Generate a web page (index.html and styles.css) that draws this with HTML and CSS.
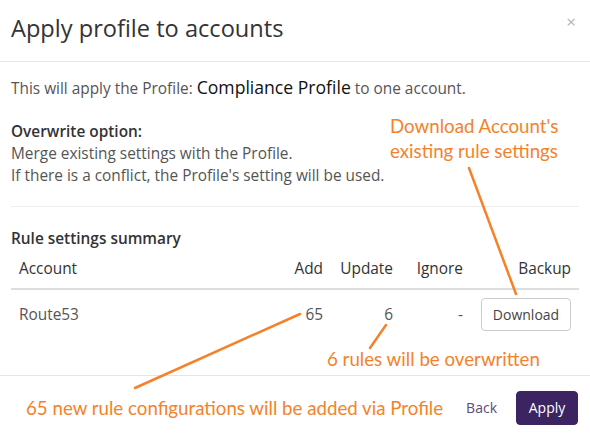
FILE: index.html
```html
<!DOCTYPE html>
<html>
<head>
<meta charset="utf-8">
<link rel="stylesheet" href="styles.css">
</head>
<body>
<div class="modal">
  <div class="modal-header">
    <h4 class="modal-title">Apply profile to accounts</h4>
    <span class="close">&times;</span>
  </div>
  <div class="modal-body">
    <p class="intro">This will apply the Profile: <span class="profile-name">Compliance Profile</span> to one account.</p>
    <div class="option">
      <div class="label">Overwrite option:</div>
      <div>Merge existing settings with the Profile.</div>
      <div>If there is a conflict, the Profile's setting will be used.</div>
    </div>
    <hr class="divider">
    <div class="label">Rule settings summary</div>
    <table class="summary">
      <colgroup>
        <col>
        <col class="c-add">
        <col class="c-update">
        <col class="c-ignore">
        <col class="c-backup">
      </colgroup>
      <thead>
        <tr>
          <th class="left">Account</th>
          <th>Add</th>
          <th>Update</th>
          <th>Ignore</th>
          <th>Backup</th>
        </tr>
      </thead>
      <tbody>
        <tr>
          <td class="left">Route53</td>
          <td>65</td>
          <td>6</td>
          <td>-</td>
          <td><button class="btn btn-default">Download</button></td>
        </tr>
      </tbody>
    </table>
  </div>
  <div class="modal-footer">
    <button class="btn btn-link">Back</button>
    <button class="btn btn-primary">Apply</button>
  </div>

  <div class="annotations">
    <svg class="lines" width="590" height="437" viewBox="0 0 590 437">
      <line x1="469" y1="168" x2="516" y2="294" />
      <line x1="386" y1="325" x2="370" y2="348" />
      <line x1="300" y1="314" x2="135" y2="388" />
    </svg>
    <div class="note note-download">Download Account's<br>existing rule settings</div>
    <div class="note note-update">6 rules will be overwritten</div>
    <div class="note note-add">65 new rule configurations will be added via Profile</div>
  </div>
</div>
</body>
</html>
```
FILE: styles.css
```css
* { box-sizing: border-box; }
html, body {
  margin: 0;
  padding: 0;
  background: #fff;
}
body {
  font-family: "Open Sans", "Noto Sans", sans-serif;
  font-size: 15.4px;
  color: #555;
  line-height: 22px;
}
.modal {
  position: relative;
  width: 590px;
  height: 437px;
  overflow: hidden;
}
.modal-header {
  display: flex;
  justify-content: space-between;
  align-items: flex-start;
  padding: 12px 14px 14px 11px;
  border-bottom: 1px solid #e5e5e5;
  height: 62px;
}
.modal-title {
  margin: 0;
  font-size: 23.6px;
  font-weight: 400;
  color: #333;
  line-height: 32px;
}
.close {
  color: #b5b5b5;
  font-size: 17px;
  line-height: 17px;
  margin-top: 1px;
}
.modal-body {
  padding: 14px 11px 0 11px;
  height: 313px;
}
.intro {
  margin: 0 0 21px 0;
}
.profile-name {
  color: #111;
  font-size: 17.6px;
}
.label {
  font-weight: 600;
  color: #333;
}
.divider {
  border: 0;
  border-top: 1px solid #eee;
  margin: 19px 0 21px 0;
}
.summary {
  width: 100%;
  border-collapse: collapse;
  table-layout: fixed;
}
.c-add { width: 70px; }
.c-update { width: 70px; }
.c-ignore { width: 70px; }
.c-backup { width: 108px; }
.summary th,
.summary td {
  padding: 8px;
  text-align: right;
  font-weight: 400;
  vertical-align: middle;
  white-space: nowrap;
}
.summary th {
  color: #333;
  border-bottom: 2px solid #ddd;
}
.summary .left { text-align: left; }
.btn {
  font-family: inherit;
  font-size: 14px;
  line-height: 20px;
  padding: 6px 12px;
  border-radius: 4px;
  border: 1px solid transparent;
  background: none;
  cursor: pointer;
}
.btn-default {
  color: #444;
  background: #fff;
  border-color: #ccc;
  width: 90px;
  height: 33px;
  padding: 5px 0;
}
.modal-footer {
  display: flex;
  justify-content: flex-end;
  align-items: center;
  gap: 8px;
  padding: 15px 12px 15px 15px;
  border-top: 1px solid #e5e5e5;
}
.btn-link {
  color: #5b4a80;
  padding: 6px 10px;
}
.btn-primary {
  background: #3c2361;
  color: #fff;
  border-color: #3c2361;
  width: 62px;
  height: 34px;
  padding: 6px 0;
}
.annotations {
  position: absolute;
  left: 0;
  top: 0;
  width: 590px;
  height: 437px;
  pointer-events: none;
}
.lines {
  position: absolute;
  left: 0;
  top: 0;
}
.lines line {
  stroke: #f5822a;
  stroke-width: 2.5;
  stroke-linecap: round;
}
.note {
  position: absolute;
  color: #f5822a;
  font-family: Lato, "Open Sans", sans-serif;
  font-size: 18.7px;
  line-height: 25px;
  white-space: nowrap;
}
.note-download { left: 390px; top: 114px; }
.note-update { left: 327px; top: 347px; }
.note-add { left: 26px; top: 396px; }
```
